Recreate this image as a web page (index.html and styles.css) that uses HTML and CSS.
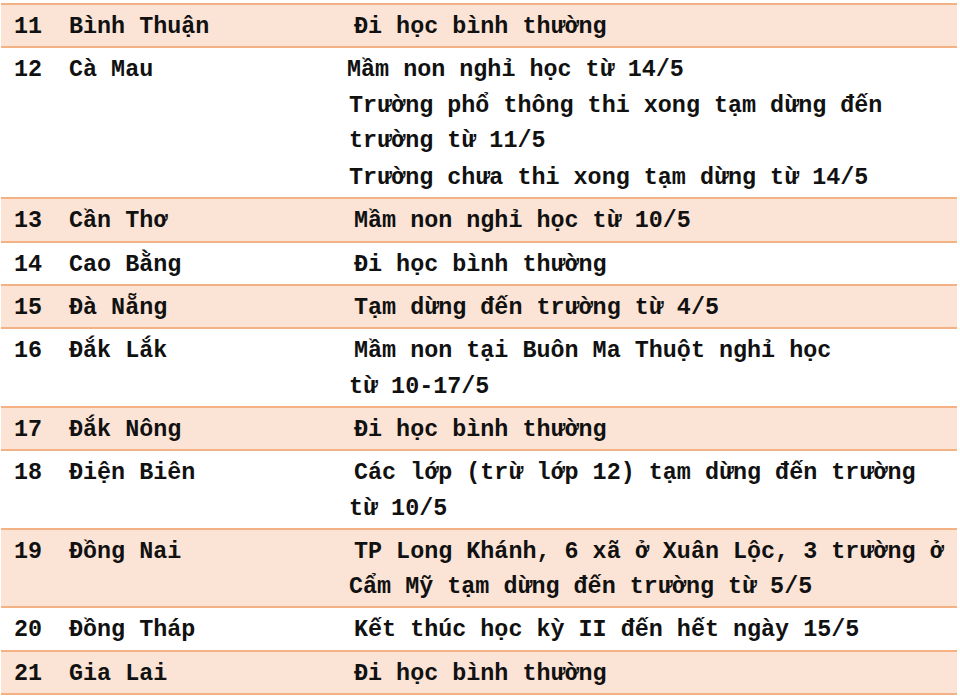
FILE: index.html
```html
<!DOCTYPE html>
<html lang="vi">
<head>
<meta charset="utf-8">
<link rel="stylesheet" href="styles.css">
</head>
<body>
<div class="table">
  <div class="row alt">
    <div class="num">11</div><div class="name">Bình Thuận</div>
    <div class="info"><div class="ln ind">Đi học bình thường</div></div>
  </div>
  <div class="row">
    <div class="num">12</div><div class="name">Cà Mau</div>
    <div class="info">
      <div class="ln neg">Mầm non nghỉ học từ 14/5</div>
      <div class="ln">Trường phổ thông thi xong tạm dừng đến</div>
      <div class="ln">trường từ 11/5</div>
      <div class="ln para">Trường chưa thi xong tạm dừng từ 14/5</div>
    </div>
  </div>
  <div class="row alt">
    <div class="num">13</div><div class="name">Cần Thơ</div>
    <div class="info"><div class="ln ind">Mầm non nghỉ học từ 10/5</div></div>
  </div>
  <div class="row">
    <div class="num">14</div><div class="name">Cao Bằng</div>
    <div class="info"><div class="ln ind">Đi học bình thường</div></div>
  </div>
  <div class="row alt">
    <div class="num">15</div><div class="name">Đà Nẵng</div>
    <div class="info"><div class="ln ind">Tạm dừng đến trường từ 4/5</div></div>
  </div>
  <div class="row">
    <div class="num">16</div><div class="name">Đắk Lắk</div>
    <div class="info">
      <div class="ln ind">Mầm non tại Buôn Ma Thuột nghỉ học</div>
      <div class="ln">từ 10-17/5</div>
    </div>
  </div>
  <div class="row alt">
    <div class="num">17</div><div class="name">Đắk Nông</div>
    <div class="info"><div class="ln ind">Đi học bình thường</div></div>
  </div>
  <div class="row">
    <div class="num">18</div><div class="name">Điện Biên</div>
    <div class="info">
      <div class="ln ind">Các lớp (trừ lớp 12) tạm dừng đến trường</div>
      <div class="ln">từ 10/5</div>
    </div>
  </div>
  <div class="row alt">
    <div class="num">19</div><div class="name">Đồng Nai</div>
    <div class="info">
      <div class="ln ind">TP Long Khánh, 6 xã ở Xuân Lộc, 3 trường ở</div>
      <div class="ln">Cẩm Mỹ tạm dừng đến trường từ 5/5</div>
    </div>
  </div>
  <div class="row">
    <div class="num">20</div><div class="name">Đồng Tháp</div>
    <div class="info"><div class="ln ind">Kết thúc học kỳ II đến hết ngày 15/5</div></div>
  </div>
  <div class="row alt last">
    <div class="num">21</div><div class="name">Gia Lai</div>
    <div class="info"><div class="ln ind">Đi học bình thường</div></div>
  </div>
</div>
</body>
</html>
```

FILE: styles.css
```css
html, body {
  margin: 0;
  padding: 0;
  background: #ffffff;
}

.table {
  padding: 3px 3px 0 1px;
  font-family: "Liberation Mono", "DejaVu Sans Mono", monospace;
  font-weight: bold;
  font-size: 23.4px;
  color: #111111;
}

.row {
  display: grid;
  grid-template-columns: 55px 280px 1fr;
  padding: 5px 0 1px 13px;
  line-height: 35.3px;
  border-top: 2px solid #f4b183;
}

.row.alt {
  background: #fbe4d5;
}

.row.last {
  border-bottom: 2px solid #f4b183;
}

.ln {
  white-space: nowrap;
}

.ln.ind {
  padding-left: 5px;
}

.ln.neg {
  margin-left: -2px;
}

.ln.para {
  margin-top: 2px;
}
```
